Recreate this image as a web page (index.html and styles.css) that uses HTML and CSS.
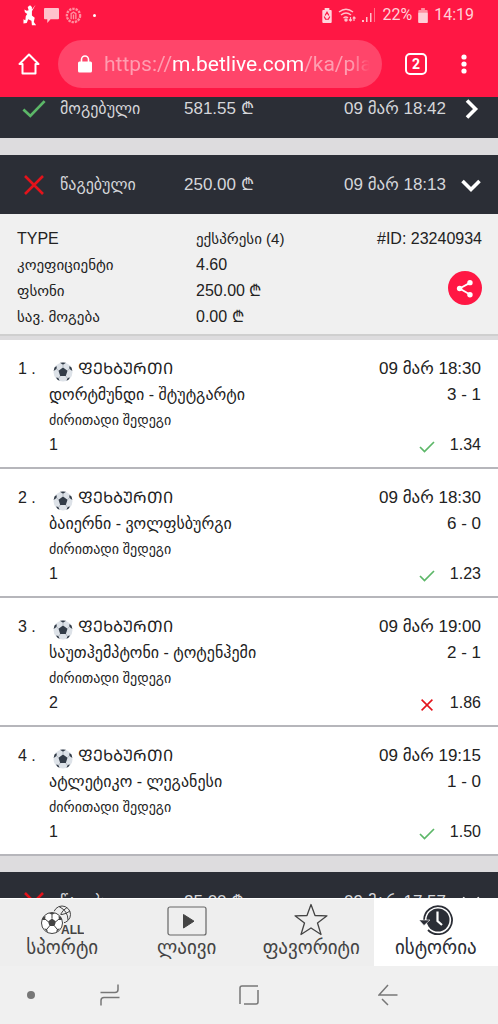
FILE: index.html
```html
<!DOCTYPE html>
<html lang="ka">
<head>
<meta charset="utf-8">
<meta name="viewport" content="width=device-width, initial-scale=1">
<title>ისტორია</title>
<link rel="stylesheet" href="styles.css">
</head>
<body>
<svg class="sprites" aria-hidden="true">
  <symbol id="check" viewBox="0 0 26 20"><path d="M1.500 10.500 9 17.500 24.500 1.500" fill="none" stroke="currentColor" stroke-width="3"/></symbol>
  <symbol id="check-thin" viewBox="0 0 16 12"><path d="M1 6 5.500 10.500 15 1" fill="none" stroke="currentColor" stroke-width="1.700"/></symbol>
  <symbol id="cross" viewBox="0 0 20 20"><path d="M1 1 19 19M19 1 1 19" fill="none" stroke="currentColor" stroke-width="2.600"/></symbol>
  <symbol id="right" viewBox="0 0 20 20"><path d="M6 1.500 14.500 10 6 18.500" fill="none" stroke="currentColor" stroke-width="3.600"/></symbol>
  <symbol id="down" viewBox="0 0 20 20"><path d="M1.500 6 10 14.500 18.500 6" fill="none" stroke="currentColor" stroke-width="3.600"/></symbol>
  <symbol id="ball" viewBox="0 0 20 20">
    <circle cx="10" cy="10" r="9.500" fill="#dde2e8"/>
    <path d="M10 5.500 14.500 8.800 12.800 14H7.200L5.500 8.800ZM7 .8Q10 0 13 .8L10 2.800ZM.6 9 1.500 5.500 3.500 4 3.800 6.800ZM19.400 9 18.500 5.500 16.500 4 16.200 6.800ZM3 15.500 5.500 16 6.500 18.700 4.500 17.700ZM17 15.500 14.500 16 13.500 18.700 15.500 17.700Z" fill="#333c48"/>
    <path d="M10 5.500V2.500M5.500 8.800 3.500 6.500M14.500 8.800 16.500 6.500M7.200 14 5.500 16.500M12.800 14 14.500 16.500" stroke="#a9b0b8" stroke-width=".8"/>
  </symbol>
</svg>

<header class="browser">
  <div class="status">
    <div class="status-side">
      <svg class="s-runner" viewBox="0 0 16 24"><path d="M13.500.5 9.500 7.500 9.500 12 12.500 14.500 11.500 19 14 22.500 9.500 22.500 9 17.500 5.500 16 4 20 .5 20.500 .5 16 2.500 17 3 12.500 4.500 10.500 2 8.500 1.500 5.500 4 7 6 6.500 5 3 7.500 1 9.500 3 9.500 5.500Z" fill="#fff"/></svg>
      <svg class="s-chat" viewBox="0 0 16 16"><path d="M1 0H15Q16 0 16 1V11Q16 12 15 12H7L3.500 16V12H1Q0 12 0 11V1Q0 0 1 0Z" fill="#ffc2cc"/></svg>
      <svg class="s-crest" viewBox="0 0 18 18" fill="none" stroke="#ff8f9f"><circle cx="9" cy="9" r="7" stroke-width="2.500" stroke-dasharray="2.500 1"/><path d="M6.500 13V7L9 5.500 11.500 7V13M9 8V13" stroke-width="1.500"/></svg>
      <span class="s-dot"></span>
    </div>
    <div class="status-side status-right">
      <svg class="s-saver" viewBox="0 0 10 16"><path d="M2.500 2V0H7.500V2H9Q10 2 10 3V15Q10 16 9 16H1Q0 16 0 15V3Q0 2 1 2Z" fill="#ffd5dc"/><path d="M3 8 5 4.500 7 8M8 9 6.500 12H3.500L2 9" fill="none" stroke="#ff1744" stroke-width="1.300"/></svg>
      <svg class="s-wifi" viewBox="0 0 18 15" fill="none" stroke="#ffc2cc" stroke-width="1.500"><path d="M1 4Q8-1.500 15 4M3 7Q8 3 13 7M5.500 10Q8 8 10 10"/><path d="M12.500 9V13M11 11.500 12.500 13 14 11.500M16 13V9M14.800 10.500 16 9 17.500 10.500" stroke-width="1.200"/><circle cx="8" cy="12" r="1" fill="#ffc2cc"/></svg>
      <svg class="s-signal" viewBox="0 0 14 14"><path d="M0 12H2V14H0ZM4 9H5.500V14H4ZM8 5H9.500V14H8Z" fill="#ffc2cc"/><path d="M12 0H13V14H12Z" fill="#ff6e86"/></svg>
      <span>22%</span>
      <svg class="s-batt" viewBox="0 0 10 16"><path d="M3 2V0H7V2H9Q10 2 10 3V15Q10 16 9 16H1Q0 16 0 15V3Q0 2 1 2Z" fill="#ff90a2"/><path d="M0 5H10V15Q10 16 9 16H1Q0 16 0 15Z" fill="#ffd0d8"/></svg>
      <time>14:19</time>
    </div>
  </div>
  <div class="toolbar">
    <button class="plain" aria-label="Home"><svg class="i-home" viewBox="0 0 22 22"><path d="M1.500 11 11 1.500 20.500 11H17.500V20.500H4.500V11Z" fill="none" stroke="#fff" stroke-width="2" stroke-linejoin="round"/></svg></button>
    <a class="url" href="#">
      <svg class="i-lock" viewBox="0 0 14 18"><path d="M3.500 8V4.500A3.500 3.500 0 0 1 10.500 4.500V8" fill="none" stroke="#fff" stroke-width="1.600"/><rect y="6.500" width="14" height="11" rx="1.500" fill="#fff"/></svg>
      <span class="url-text"><span>https://</span><b>m.betlive.com</b><span>/ka/pla</span></span>
    </a>
    <button class="tabs-count" aria-label="Tabs">2</button>
    <button class="plain" aria-label="Menu"><svg class="i-dots" viewBox="0 0 6 20" fill="#fff"><circle cx="3" cy="3" r="2.600"/><circle cx="3" cy="10" r="2.600"/><circle cx="3" cy="17" r="2.600"/></svg></button>
  </div>
</header>

<main class="history">
  <div class="feed">
    <button class="bet">
      <svg class="mark won"><use href="#check"/></svg>
      <span class="state">მოგებული</span><span class="sum">581.55 ₾</span><time>09 მარ 18:42</time>
      <svg class="arrow"><use href="#right"/></svg>
    </button>

    <button class="bet" aria-expanded="true">
      <svg class="mark lost"><use href="#cross"/></svg>
      <span class="state">წაგებული</span><span class="sum">250.00 ₾</span><time>09 მარ 18:13</time>
      <svg class="arrow"><use href="#down"/></svg>
    </button>
    <section class="slip">
      <dl class="facts">
        <dt class="latin">TYPE</dt><dd class="kind">ექსპრესი (4)</dd>
        <dt>კოეფიციენტი</dt><dd>4.60</dd>
        <dt>ფსონი</dt><dd>250.00 ₾</dd>
        <dt>სავ. მოგება</dt><dd>0.00 ₾</dd>
      </dl>
      <div class="slip-side">
        <span>#ID: 23240934</span>
        <button class="share" aria-label="Share"><svg viewBox="0 0 20 20"><path d="M16 3.500 4 10 16 17" fill="none" stroke="#fff" stroke-width="2"/><g fill="#fff"><circle cx="15.500" cy="3.500" r="3"/><circle cx="4" cy="10" r="3"/><circle cx="15.500" cy="17" r="3"/></g></svg></button>
      </div>
    </section>

    <ol class="games">
      <li class="game">
        <span class="num">1 .</span>
        <div class="info"><div class="sport"><svg class="ball"><use href="#ball"/></svg>ᲤᲔᲮᲑᲣᲠᲗᲘ</div><div class="teams">დორტმუნდი - შტუტგარტი</div><div class="market">ძირითადი შედეგი</div><div class="pick">1</div></div>
        <div class="result"><time>09 მარ 18:30</time><div class="score">3 - 1</div><div class="odds"><svg class="tick won"><use href="#check-thin"/></svg>1.34</div></div>
      </li>
      <li class="game">
        <span class="num">2 .</span>
        <div class="info"><div class="sport"><svg class="ball"><use href="#ball"/></svg>ᲤᲔᲮᲑᲣᲠᲗᲘ</div><div class="teams">ბაიერნი - ვოლფსბურგი</div><div class="market">ძირითადი შედეგი</div><div class="pick">1</div></div>
        <div class="result"><time>09 მარ 18:30</time><div class="score">6 - 0</div><div class="odds"><svg class="tick won"><use href="#check-thin"/></svg>1.23</div></div>
      </li>
      <li class="game">
        <span class="num">3 .</span>
        <div class="info"><div class="sport"><svg class="ball"><use href="#ball"/></svg>ᲤᲔᲮᲑᲣᲠᲗᲘ</div><div class="teams">საუთჰემპტონი - ტოტენჰემი</div><div class="market">ძირითადი შედეგი</div><div class="pick">2</div></div>
        <div class="result"><time>09 მარ 19:00</time><div class="score">2 - 1</div><div class="odds"><svg class="tick lost"><use href="#cross"/></svg>1.86</div></div>
      </li>
      <li class="game">
        <span class="num">4 .</span>
        <div class="info"><div class="sport"><svg class="ball"><use href="#ball"/></svg>ᲤᲔᲮᲑᲣᲠᲗᲘ</div><div class="teams">ატლეტიკო - ლეგანესი</div><div class="market">ძირითადი შედეგი</div><div class="pick">1</div></div>
        <div class="result"><time>09 მარ 19:15</time><div class="score">1 - 0</div><div class="odds"><svg class="tick won"><use href="#check-thin"/></svg>1.50</div></div>
      </li>
    </ol>

    <button class="bet">
      <svg class="mark lost"><use href="#cross"/></svg>
      <span class="state">წაგებული</span><span class="sum">25.00 ₾</span><time>09 მარ 17:57</time>
      <svg class="arrow"><use href="#down"/></svg>
    </button>
  </div>
</main>

<nav class="tabs">
  <a class="tab" href="#"><svg class="t-sport" viewBox="0 0 44 31">
    <g fill="none" stroke="#444" stroke-width="1"><circle cx="22" cy="9.500" r="8.500"/><path d="M14 8Q22 12 30 6M19 1.500Q28 6 28 15M27 2.500Q18 8 20 18"/></g>
    <circle cx="12" cy="18" r="12" fill="#eee"/><circle cx="12" cy="18" r="10.500" fill="#fff" stroke="#444"/>
    <path d="M12 13.500 16 16.500 14.500 21H9.500L8 16.500ZM9 8 12 10 15 8ZM2 15 3 12 5.500 11 5 15ZM22 15 21 12 18.500 11 19 15ZM4 23.500 7 24 8 27.500ZM20 23.500 17 24 16 27.500Z" fill="#444"/><path d="M12 13.500V10M8 16.500 5 14M16 16.500 19 14M9.500 21 7 24M14.500 21 17 24" stroke="#444"/>
    <text class="all" x="21" y="29">ALL</text></svg><span>სპორტი</span></a>
  <a class="tab" href="#"><svg class="t-live" viewBox="0 0 40 30"><rect x="1" y="1" width="38" height="28" rx="2" fill="none" stroke="#666" stroke-width="1.200"/><path d="M16.500 8.500V22L27 15.200Z" fill="#444" stroke="#444" stroke-linejoin="round"/></svg><span>ლაივი</span></a>
  <a class="tab" href="#"><svg class="t-star" viewBox="0 0 34 33"><path d="M17 1.500 21 12.500 33 12.800 23.500 20 27 31.500 17 25 7 31.500 10.500 20 1 12.800 13 12.500Z" fill="none" stroke="#444" stroke-width="1.300" stroke-linejoin="round"/></svg><span>ფავორიტი</span></a>
  <a class="tab active" href="#" aria-current="page"><svg class="t-clock" viewBox="0 0 34 31"><circle cx="19" cy="15" r="11.500" fill="#2b2e36"/><path d="M5 15A14 14 0 1 1 9 25" fill="none" stroke="#2b2e36" stroke-width="1.800"/><path d="M0 15H11L5 20.500Z" fill="#2b2e36" stroke="#fff" stroke-width=".6"/><path d="M18.500 6.500V16L23 20" fill="none" stroke="#fff" stroke-width="2.200"/></svg><span>ისტორია</span></a>
</nav>
<footer class="system">
  <span class="sys-dot"></span>
  <div class="sys-keys">
    <button class="plain" aria-label="Recents"><svg class="n-rec" viewBox="0 0 20 22" fill="none" stroke="#777" stroke-width="1.500"><path d="M.5 8.500H15Q18 8.500 18 5.500V.5M19.500 13.500H4Q1 13.500 1 16.500V21.500"/></svg></button>
    <button class="plain" aria-label="Home screen"><svg class="n-home" viewBox="0 0 20 20" fill="none" stroke="#777" stroke-width="1.500"><path d="M1 19V3Q1 1 3 1H19M19 5V17Q19 19 17 19H5"/></svg></button>
    <button class="plain" aria-label="Back"><svg class="n-back" viewBox="0 0 20 22" fill="none" stroke="#777" stroke-width="1.500"><path d="M19.500 11H1L10 1M4 15 10 21"/></svg></button>
  </div>
</footer>
</body>
</html>
```
FILE: styles.css
```css
* { box-sizing: border-box; }
body {
  margin: 0;
  height: 100vh;
  display: flex;
  flex-direction: column;
  overflow: hidden;
  background: #dddcde;
  color: #222;
  font: 16px/26px "Liberation Sans", "DejaVu Sans", sans-serif;
}
button { font: inherit; color: inherit; border: 0; padding: 0; background: none; }
a { color: inherit; text-decoration: none; }
svg { display: block; flex: none; }
.sprites { display: none; }
.plain { display: flex; }
.won { color: #5cb768; }
.lost { color: #e3131b; }

.browser { flex: none; background: #ff1744; color: #fff; font-family: Roboto, sans-serif; }
.status { display: flex; justify-content: space-between; height: 30px; padding: 0 24px 0 23px; align-items: center; }
.status-side { display: flex; align-items: center; gap: 6px; }
.status-right { font-size: 16px; line-height: 30px; color: #ffd0d8; }
.s-runner { width: 15px; height: 23px; }
.s-chat { width: 15px; height: 15px; }
.s-crest { width: 17px; height: 17px; }
.s-dot { width: 3px; height: 3px; margin-left: 5px; border-radius: 50%; background: #fff; }
.s-saver, .s-batt { width: 10px; height: 15px; }
.s-wifi { width: 18px; height: 15px; }
.s-signal { width: 14px; height: 14px; }

.toolbar { display: flex; align-items: center; height: 67px; padding: 0 31px 0 18px; }
.i-home { width: 22px; height: 22px; }
.url { flex: 1; min-width: 0; display: flex; align-items: center; gap: 12px; height: 48px; margin: 0 23px 0 18px; padding: 0 12px 0 20px; border-radius: 24px; background: #ff456a; }
.i-lock { width: 14px; height: 18px; }
.url-text { flex: 1; overflow: hidden; white-space: nowrap; font-size: 21px; line-height: 30px; color: #ff9db0; mask-image: linear-gradient(to right, #000 93%, transparent); }
.url-text b { font-weight: 400; color: #fff; }
.tabs-count { width: 22px; height: 22px; margin-right: 34px; border: 2px solid #fff; border-radius: 5px; font-size: 14px; line-height: 18px; font-weight: 700; }
.i-dots { width: 6px; height: 20px; }

.history { flex: 1; min-height: 0; overflow: hidden; }
.feed { margin-top: -18px; }
.bet { display: grid; grid-template-columns: 38px 124px 1fr auto 35px; align-items: center; width: 100%; height: 59px; padding: 0 17px 0 22px; background: #2b2e36; color: #d5d6da; text-align: left; }
.bet + .bet { margin-top: 17px; }
.games + .bet { margin-top: 16px; }
.bet time, .sum { font-size: 17px; }
.mark { width: 24px; height: 20px; }
.arrow { width: 20px; height: 20px; justify-self: end; color: #fff; }

.slip { display: flex; justify-content: space-between; padding: 12px 16px 4px 17px; background: #f0f0f0; border-bottom: 2px solid #cfcfcf; }
.facts { display: grid; grid-template-columns: 179px auto; margin: 0; }
.facts dt, .facts .kind { font-size: 15px; }
.facts .latin { font-size: 16px; }
.facts dd { margin: 0; }
.slip-side { display: flex; flex-direction: column; align-items: flex-end; gap: 19px; }
.share { display: flex; align-items: center; justify-content: center; width: 34px; height: 34px; border-radius: 50%; background: #ff1744; }
.share svg { width: 18px; height: 19px; }

.games { list-style: none; margin: 4px 0 0; padding: 0; }
.game { display: flex; padding: 16px 17px 10px 18px; background: #fff; border-bottom: 2px solid #b6b6bb; }
.num { width: 31px; }
.info { flex: 1; }
.sport { display: flex; gap: 5px; padding-left: 4px; }
.ball { width: 20px; height: 20px; margin-top: 6px; }
.market { font-size: 14px; line-height: 24px; }
.pick, .odds { line-height: 25px; }
.result { display: flex; flex-direction: column; align-items: flex-end; }
.result time, .score { font-size: 17px; }
.odds { display: flex; align-items: center; gap: 15px; margin-top: auto; }
.tick { width: 16px; height: 12px; margin-top: 5px; }

.tabs { flex: none; display: grid; grid-template-columns: repeat(4, 1fr); height: 68px; background: #eee; border-top: 1px solid #fff; color: #444; }
.tab { display: flex; flex-direction: column; align-items: center; justify-content: flex-end; padding-bottom: 6px; font-size: 19px; line-height: 24px; }
.tab.active { background: #fff; color: #2b2e36; }
.t-sport { width: 44px; height: 31px; }
.all { font: bold 12px "Liberation Sans", sans-serif; fill: #444; }
.t-live { width: 40px; height: 30px; }
.t-star { width: 34px; height: 33px; }
.t-clock { width: 34px; height: 31px; }

.system { flex: none; display: flex; align-items: center; height: 58px; padding: 0 100px 0 27px; background: #f0f0f0; }
.sys-dot { width: 8px; height: 8px; margin-right: 65px; border-radius: 50%; background: #777; }
.sys-keys { flex: 1; display: flex; align-items: center; justify-content: space-between; }
.n-rec, .n-back { width: 20px; height: 22px; }
.n-home { width: 20px; height: 20px; }
```
